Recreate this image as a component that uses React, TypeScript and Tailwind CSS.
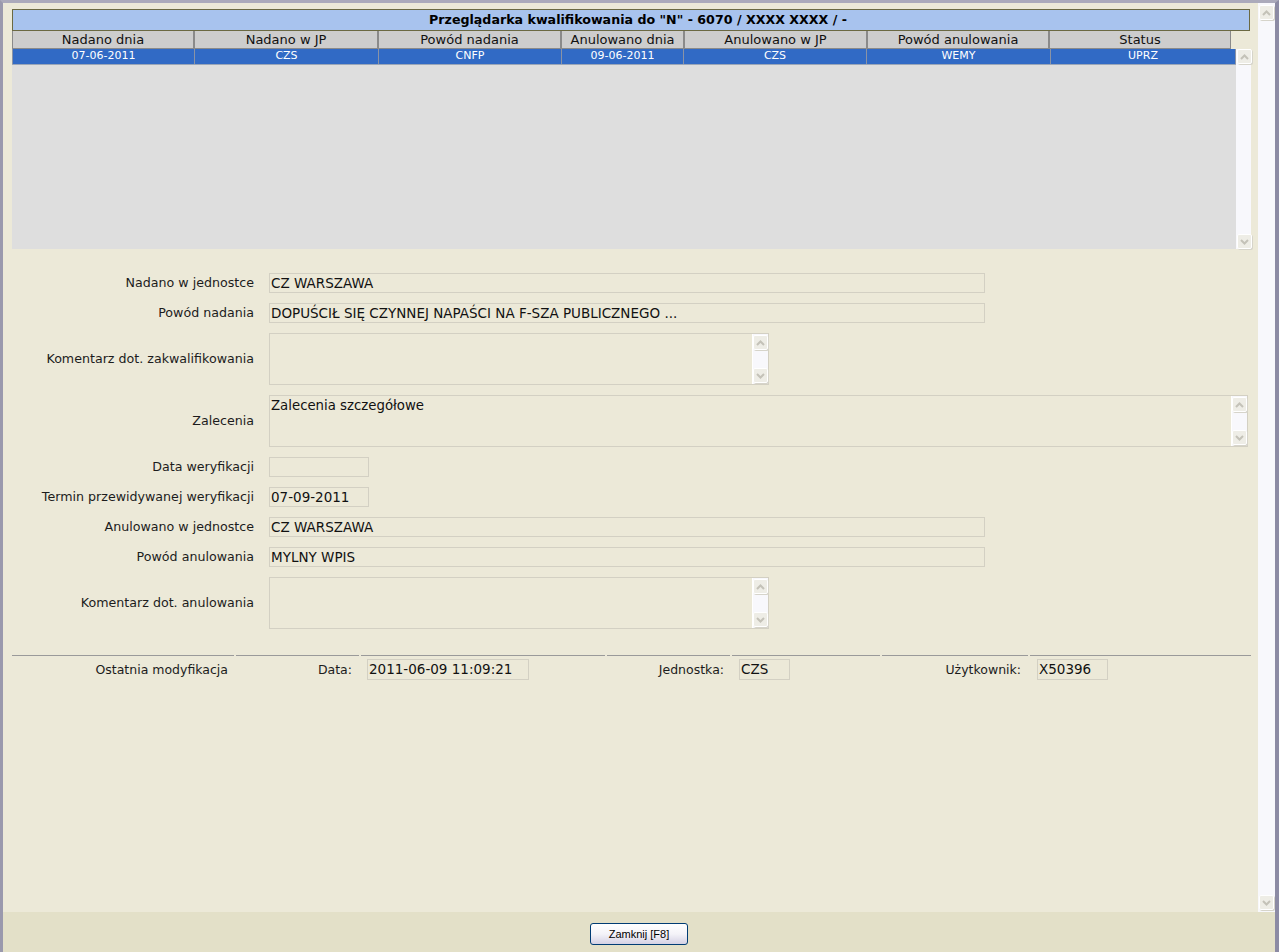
import React from "react";

function ScrollBtn({ dir }: { dir: "up" | "down" }) {
  return (
    <div className="w-[15px] h-[15px] bg-[#EEEDE6] border border-white shadow-[1px_1px_0_#D6D4CA] rounded-[2px] flex items-center justify-center shrink-0">
      <svg width="9" height="6" viewBox="0 0 9 6">
        <polyline
          points={dir === "up" ? "1,5 4.5,1.5 8,5" : "1,1 4.5,4.5 8,1"}
          fill="none"
          stroke="#C4C2B8"
          strokeWidth="2"
        />
      </svg>
    </div>
  );
}

function VScroll({ className }: { className: string }) {
  return (
    <div className={"flex flex-col justify-between bg-[#F8F8FC] " + className}>
      <ScrollBtn dir="up" />
      <ScrollBtn dir="down" />
    </div>
  );
}

const headers: [string, string][] = [
  ["Nadano dnia", "w-[182px]"],
  ["Nadano w JP", "w-[184px]"],
  ["Powód nadania", "w-[183px]"],
  ["Anulowano dnia", "w-[123px]"],
  ["Anulowano w JP", "w-[183px]"],
  ["Powód anulowania", "w-[182px]"],
  ["Status", "w-[182px]"],
];

const rowCells: [string, string][] = [
  ["07-06-2011", "w-[183px]"],
  ["CZS", "w-[184px]"],
  ["CNFP", "w-[183px]"],
  ["09-06-2011", "w-[122px]"],
  ["CZS", "w-[183px]"],
  ["WEMY", "w-[184px]"],
  ["UPRZ", "w-[185px]"],
];

function Field({ w, value }: { w: string; value?: string }) {
  return (
    <div
      className={
        "h-[20px] border border-[#D3D0C3] bg-[#ECE9D8] pl-[1px] flex items-center text-[13.5px] text-[#111] whitespace-nowrap overflow-hidden " +
        w
      }
    >
      {value}
    </div>
  );
}

function Area({ w, value }: { w: string; value?: string }) {
  return (
    <div className={"h-[52px] border border-[#D3D0C3] bg-[#ECE9D8] flex " + w}>
      <div className="flex-1 pl-[1px] pt-[1px] text-[13.3px] leading-[18px] text-[#111]">{value}</div>
      <VScroll className="w-[16px] border-l border-white py-px pr-px" />
    </div>
  );
}

function Row({ label, children }: { label: string; children: React.ReactNode }) {
  return (
    <div className="flex items-center">
      <div className="w-[242px] text-right text-[12.65px] text-[#1c1c1c] whitespace-nowrap">{label}</div>
      <div className="ml-[15px]">{children}</div>
    </div>
  );
}

export default function App() {
  return (
    <div className="w-[1279px] h-[952px] flex flex-col bg-[#ECE9D8] border-l-[3px] border-t-[3px] border-r-[4px] border-l-[#9A99AD] border-t-[#ABAABB] border-r-[#8C8BA4] overflow-hidden font-['DejaVu_Sans',sans-serif]">
      <div className="flex flex-1 min-h-0">
        <main className="flex-1 pl-[9px] pr-[7px] pt-[6px] flex flex-col">
          {/* Title */}
          <div className="w-[1238px] h-[22px] bg-[#A8C3EE] border border-[#6B6942] flex items-center justify-center pl-[14px] text-[12.65px] font-bold text-black">
            Przeglądarka kwalifikowania do "N" - 6070 / XXXX XXXX / -
          </div>

          {/* Grid header */}
          <div className="flex h-[18px]">
            {headers.map(([h, w]) => (
              <div
                key={h}
                className={
                  "h-full bg-[#CDCDCD] border-l border-r border-b border-[#8A8A8A] flex items-center justify-center text-[13px] text-[#111] leading-none " +
                  w
                }
              >
                {h}
              </div>
            ))}
          </div>

          {/* Grid body */}
          <div className="flex h-[200px]">
            <div className="w-[1224px] bg-[#DEDEDE]">
              <div className="flex h-[16px] bg-[#316AC5] border-b border-[#9AA6B8]">
                {rowCells.map(([v, w], i) => (
                  <div
                    key={i}
                    className={
                      "h-full flex items-center justify-center text-[11px] text-white border-r border-[#8A93A5] " +
                      (i === 0 ? "border-l " : "") +
                      w
                    }
                  >
                    {v}
                  </div>
                ))}
              </div>
            </div>
            <VScroll className="w-[15px] pl-px" />
          </div>

          {/* Form */}
          <div className="mt-[24px] flex flex-col gap-[10px]">
            <Row label="Nadano w jednostce">
              <Field w="w-[716px]" value="CZ WARSZAWA" />
            </Row>
            <Row label="Powód nadania">
              <Field w="w-[716px]" value="DOPUŚCIŁ SIĘ CZYNNEJ NAPAŚCI NA F-SZA PUBLICZNEGO ..." />
            </Row>
            <Row label="Komentarz dot. zakwalifikowania">
              <Area w="w-[500px]" />
            </Row>
            <Row label="Zalecenia">
              <Area w="w-[979px]" value="Zalecenia szczegółowe" />
            </Row>
            <Row label="Data weryfikacji">
              <Field w="w-[100px]" />
            </Row>
            <Row label="Termin przewidywanej weryfikacji">
              <Field w="w-[100px]" value="07-09-2011" />
            </Row>
            <Row label="Anulowano w jednostce">
              <Field w="w-[716px]" value="CZ WARSZAWA" />
            </Row>
            <Row label="Powód anulowania">
              <Field w="w-[716px]" value="MYLNY WPIS" />
            </Row>
            <Row label="Komentarz dot. anulowania">
              <Area w="w-[500px]" />
            </Row>
          </div>

          {/* Last modification */}
          <div className="mt-[26px] flex gap-[2px] w-[1239px]">
            <div className="w-[222px] border-t border-[#9A9A9A] pt-[4px] h-[25px] flex items-center justify-end pr-[6px] text-[12.5px] text-[#1c1c1c]">
              Ostatnia modyfikacja
            </div>
            <div className="w-[123px] border-t border-[#9A9A9A] pt-[4px] h-[25px] flex items-center justify-end pr-[7px] text-[12.5px] text-[#1c1c1c]">
              Data:
            </div>
            <div className="w-[244px] border-t border-[#9A9A9A] pt-[3px] pl-[6px]">
              <div className="w-[162px] h-[21px] border border-[#D3D0C3] pl-[1px] flex items-center text-[13.5px] text-[#111]">
                2011-06-09 11:09:21
              </div>
            </div>
            <div className="w-[123px] border-t border-[#9A9A9A] pt-[4px] h-[25px] flex items-center justify-end pr-[6px] text-[12.5px] text-[#1c1c1c]">
              Jednostka:
            </div>
            <div className="w-[148px] border-t border-[#9A9A9A] pt-[3px] pl-[7px]">
              <div className="w-[51px] h-[21px] border border-[#D3D0C3] pl-[1px] flex items-center text-[13.5px] text-[#111]">
                CZS
              </div>
            </div>
            <div className="w-[146px] border-t border-[#9A9A9A] pt-[4px] h-[25px] flex items-center justify-end pr-[7px] text-[12.5px] text-[#1c1c1c]">
              Użytkownik:
            </div>
            <div className="w-[221px] border-t border-[#9A9A9A] pt-[3px] pl-[7px]">
              <div className="w-[71px] h-[21px] border border-[#D3D0C3] pl-[1px] flex items-center text-[13.5px] text-[#111]">
                X50396
              </div>
            </div>
          </div>
        </main>
        <VScroll className="w-[17px] py-[2px] pl-px pr-[1px]" />
      </div>

      {/* Footer */}
      <div className="h-[40px] bg-[#E3E0C8] flex items-start justify-center pt-[11px]">
        <button className="w-[98px] h-[22px] rounded-[3px] border border-[#003C74] bg-gradient-to-b from-white via-[#F4F3F8] to-[#D4D1E4] text-[11px] text-black font-['Liberation_Sans',sans-serif] flex items-center justify-center">
          Zamknij [F8]
        </button>
      </div>
    </div>
  );
}
